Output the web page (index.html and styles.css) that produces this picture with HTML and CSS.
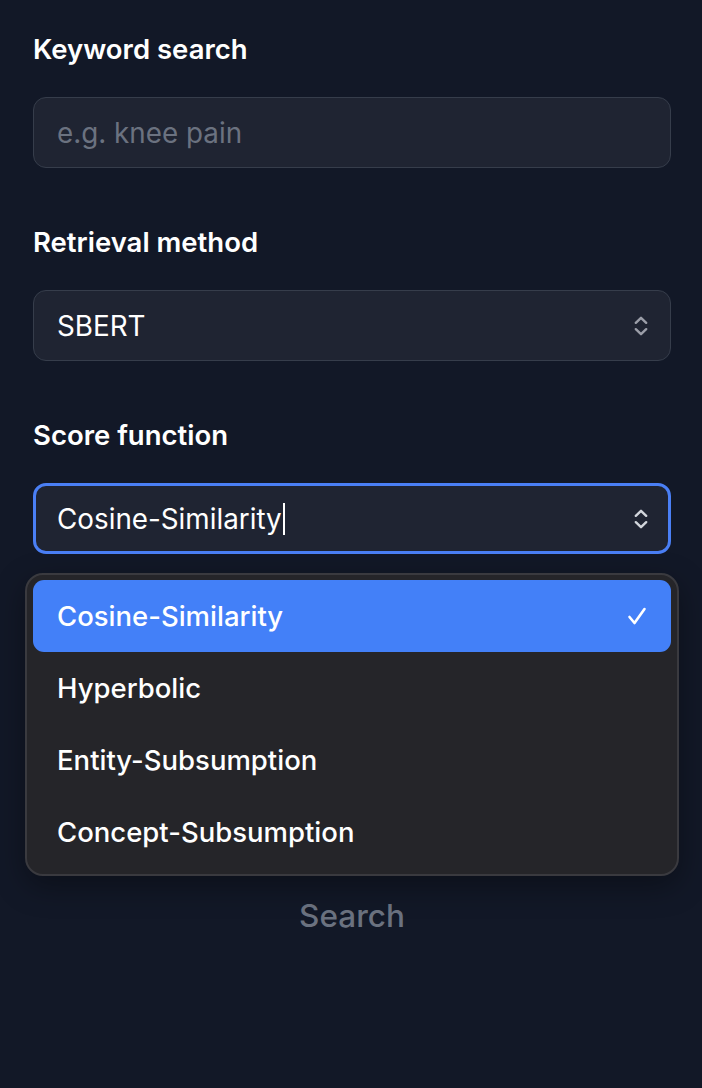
FILE: index.html
```
<!DOCTYPE html>
<html>
<head>
<meta charset="utf-8">
<link rel="stylesheet" href="styles.css">
</head>
<body>
<div class="panel">
  <div class="field">
    <div class="label">Keyword search</div>
    <div class="input"><span class="placeholder">e.g. knee pain</span></div>
  </div>
  <div class="field">
    <div class="label">Retrieval method</div>
    <div class="input select"><span class="value">SBERT</span>
      <svg class="chev" width="14" height="26" viewBox="0 0 14 26"><path d="M1.8 9.8 L7 4.8 L12.2 9.8 M1.8 16.2 L7 21.2 L12.2 16.2" fill="none" stroke="#9b9ea8" stroke-width="2.4" stroke-linecap="round" stroke-linejoin="round"/></svg>
    </div>
  </div>
  <div class="field">
    <div class="label">Score function</div>
    <div class="input select focused"><span class="value">Cosine-Similarity</span><span class="caret"></span>
      <svg class="chev" width="14" height="26" viewBox="0 0 14 26"><path d="M1.8 9.8 L7 4.8 L12.2 9.8 M1.8 16.2 L7 21.2 L12.2 16.2" fill="none" stroke="#d1d5db" stroke-width="2.4" stroke-linecap="round" stroke-linejoin="round"/></svg>
    </div>
    <div class="menu">
      <div class="option active"><span>Cosine-Similarity</span>
        <svg width="20" height="22" viewBox="0 0 20 22"><path d="M2.5 12 L7.5 18 L17.5 4" fill="none" stroke="#ffffff" stroke-width="2.6" stroke-linecap="round" stroke-linejoin="round"/></svg>
      </div>
      <div class="option"><span>Hyperbolic</span></div>
      <div class="option"><span>Entity-Subsumption</span></div>
      <div class="option"><span>Concept-Subsumption</span></div>
    </div>
  </div>
  <div class="button">Search</div>
</div>
</body>
</html>
```
FILE: styles.css
```
html, body {
  margin: 0;
  padding: 0;
  background: #121827;
  height: 100%;
}
body {
  font-family: Inter, "Liberation Sans", sans-serif;
  color: #ffffff;
}
.panel {
  padding: 33px 31px 0 33px;
  display: flex;
  flex-direction: column;
  gap: 58px;
}
.field {
  display: flex;
  flex-direction: column;
  gap: 32px;
  position: relative;
}
.label {
  font-size: 27.5px;
  font-weight: 600;
  line-height: 32px;
  color: #ffffff;
}
.input {
  box-sizing: border-box;
  height: 71px;
  border: 1px solid #363d4b;
  background: #1f2432;
  border-radius: 13px;
  display: flex;
  align-items: center;
  padding: 0 23px;
  font-size: 27.8px;
}
.placeholder {
  color: #6b7280;
}
.value {
  color: #ffffff;
}
.select .chev {
  margin-left: auto;
  margin-right: -1px;
}
.focused {
  border: 3px solid #4a7ff5;
  padding: 0 21px;
  height: 71px;
}
.caret {
  display: inline-block;
  width: 2px;
  height: 32px;
  background: #ffffff;
  margin-left: 1px;
}
.menu {
  position: absolute;
  left: -8px;
  right: -8px;
  top: 154px;
  box-sizing: border-box;
  height: 303px;
  background: #252529;
  border: 2px solid #3a3a3f;
  border-radius: 18px;
  padding: 5px 6px;
  box-shadow: 0 10px 30px rgba(0,0,0,0.35);
  z-index: 10;
}
.option {
  height: 72px;
  display: flex;
  align-items: center;
  padding: 0 24px;
  color: #ffffff;
  border-radius: 11px;
}
.option span {
  font-family: Inter, sans-serif;
  font-weight: 500;
  font-size: 27.5px;
}
.option svg {
  margin-left: auto;
}
.option.active {
  background: #4380f8;
}
.button {
  margin-top: 284px;
  text-align: center;
  font-size: 31.5px;
  color: #6b7280;
  line-height: 40px;
  font-weight: 500;
}
```
